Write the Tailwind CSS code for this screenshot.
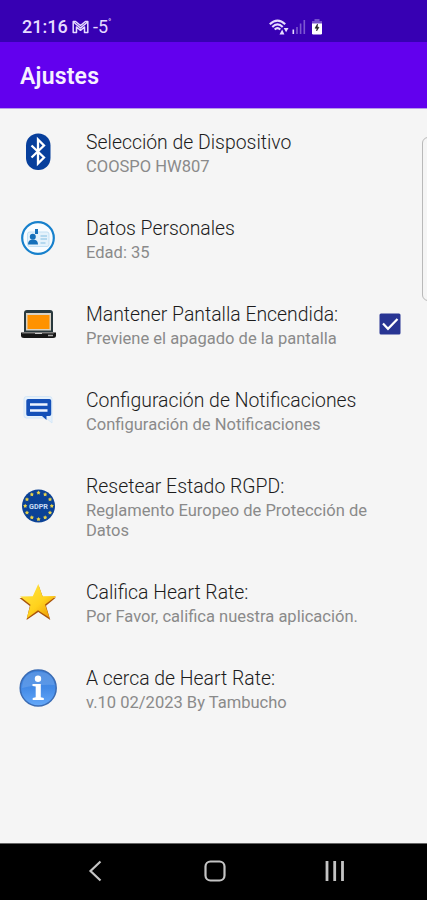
<!DOCTYPE html>
<html lang="es">
<head>
  <meta charset="UTF-8">
  <meta name="viewport" content="width=device-width, initial-scale=1.0">
  <title>Ajustes</title>
  <script src="https://cdn.jsdelivr.net/npm/@tailwindcss/browser@4"></script>
</head>
<body class="bg-[#f5f5f5] font-['Roboto',sans-serif]">
  <div class="relative flex flex-col h-[900px] w-[427px] overflow-hidden">

    <!-- Status bar -->
    <div class="h-[42px] shrink-0 bg-[#3700b3] flex items-center pl-[22px] pt-[11px] text-[#e6dcff]">
      <span class="w-[45px] text-[18px] leading-none font-medium whitespace-nowrap">21:16</span>
      <svg class="ml-[5px] w-[17px] h-[14px]" viewBox="0 0 17 14" fill="none" stroke="currentColor" stroke-width="1.5" stroke-linejoin="round">
        <path d="M1.2 12.5V1.5h2.4l4.9 4 4.9-4h2.4v11h-3.3V7l-4 3.300L4.500 7v5.500z"/>
        <path d="M1.500 2l7 6 7-6"/>
      </svg>
      <span class="ml-1 text-[18px] leading-none whitespace-nowrap">-5</span>
      <span class="mb-[9px] text-[9px] leading-[9px]">°</span>
      <!-- Wifi -->
      <svg class="ml-auto w-[20px] h-[16px]" viewBox="0 0 20 16" fill="none" stroke="currentColor" stroke-width="2.100">
        <path d="M.8 5.300Q8.500-2.200 16.200 5.300"/>
        <path d="M3.300 8Q8.500 2.800 13.700 8"/>
        <path d="M5.700 10.500Q8.500 7.700 11.300 10.500"/>
        <path d="M10.500 15.500l2.700-5 2.200 5zM14.700 9h4.800l-2.400 4.200z" fill="currentColor" stroke="none"/>
      </svg>
      <!-- Signal -->
      <svg class="ml-[3px] w-[14px] h-[15px]" viewBox="0 0 14 15" fill="none" stroke="currentColor" stroke-width="1.600">
        <path d="M1.300 10.500V15"/>
        <path d="M5 8v7M8.600 4.500V15M12.300 1v14" opacity=".4"/>
      </svg>
      <!-- Battery -->
      <svg class="ml-[5px] mr-[104px] w-[12px] h-[16px]" viewBox="0 0 12 16">
        <path d="M3.500 0h5v2H11v3H1V2h2.500z" fill="#7450cc"/>
        <path d="M1 4.500h10V14.200q0 1.300-1.300 1.300H2.300Q1 15.500 1 14.200z" fill="#fff"/>
        <path d="M6.500 5L4 9.200H6l-.4 2.800L8 8.300H6.300z" fill="#222" stroke="#222" stroke-width=".6"/>
      </svg>
    </div>

    <!-- App bar -->
    <header class="h-[67px] shrink-0 bg-[#6200ee] border-b border-[#b79be8] flex items-center pl-5 pt-[4px]">
      <h1 class="text-[23px] font-semibold tracking-[0.2px] text-[#f6f0ff]">Ajustes</h1>
    </header>

    <!-- Settings list -->
    <main class="flex-1">
      <ul>
        <li class="flex items-center h-[86px] pl-[18px]">
          <svg class="w-[40px] h-[40px] shrink-0" viewBox="0 0 40 40">
            <rect x="8" y="1.500" width="24.500" height="36.500" rx="12" fill="#073f9c"/>
            <path d="M13.500 13.500L26 25.500l-6 6V7.500l6 6L13.500 25.500" fill="none" stroke="#fff" stroke-width="2.300"/>
          </svg>
          <div class="ml-7 pt-[3px]">
            <p class="text-[19.400px] leading-[26px] text-[#1c1c1c] font-light whitespace-nowrap">Selección de Dispositivo</p>
            <p class="text-[16.550px] leading-[21px] text-[#8a8a8a]">COOSPO HW807</p>
          </div>
        </li>

        <li class="flex items-center h-[86px] pl-[18px]">
          <svg class="w-[40px] h-[40px] shrink-0" viewBox="0 0 40 40">
            <circle cx="20" cy="20" r="15.800" fill="#f8fcff" stroke="#1680cc" stroke-width="2.200"/>
            <rect x="9.500" y="14" width="21.500" height="14.500" rx="2" fill="#e5f2fb" stroke="#c3e0f4"/>
            <path d="M18.500 11v5" stroke="#1670ba" stroke-width="3"/>
            <circle cx="14.800" cy="18.800" r="3" fill="#1670ba"/>
            <path d="M10 26.500q0-4.300 3.200-4.800h3.400q3.400.5 3.400 4.800z" fill="#1670ba"/>
            <path d="M22.500 18h6.500M22.500 21h6.500M22.500 25h5" stroke="#a3cfec" stroke-width="1.300"/>
          </svg>
          <div class="ml-7 pt-[3px]">
            <p class="text-[19.400px] leading-[26px] text-[#1c1c1c] font-light whitespace-nowrap">Datos Personales</p>
            <p class="text-[16.550px] leading-[21px] text-[#8a8a8a]">Edad: 35</p>
          </div>
        </li>

        <li class="flex items-center h-[86px] pl-[18px]">
          <svg class="w-[40px] h-[40px] shrink-0" viewBox="0 0 40 40">
            <path d="M6 28V9q0-3 3-3h23q3 0 3 3v19z" fill="#29393e"/>
            <rect x="8" y="9" width="25" height="17.500" fill="#d9d2c4"/>
            <rect x="9.500" y="11" width="22" height="14" fill="#ff9200"/>
            <path d="M3 28.500h35v3q0 2.500-3 2.500H6q-3 0-3-2.500z" fill="#171717"/>
            <path d="M4 29h32" stroke="#777" stroke-width="1"/>
            <path d="M17 29.500h7" stroke="#ccc"/>
            <path d="M30 31.500h5" stroke="#aaa" stroke-width="1.500"/>
          </svg>
          <div class="ml-7 pt-[3px]">
            <p class="text-[19.400px] leading-[26px] text-[#1c1c1c] font-light whitespace-nowrap">Mantener Pantalla Encendida:</p>
            <p class="text-[16.550px] leading-[21px] text-[#8a8a8a] whitespace-nowrap">Previene el apagado de la pantalla</p>
          </div>
          <svg class="ml-auto mr-[26px] w-[22px] h-[22px] shrink-0" viewBox="0 0 22 22">
            <rect x=".5" y=".5" width="21" height="21" rx="1.500" fill="#283593"/>
            <path d="M4 10.500l5 5.300L18.500 6" fill="none" stroke="#fff" stroke-width="2.200"/>
          </svg>
        </li>

        <li class="flex items-center h-[86px] pl-[18px]">
          <svg class="w-[40px] h-[40px] shrink-0" viewBox="0 0 40 40">
            <path d="M8.500 6.500h23q2.500 0 2.500 2.500v24l-6-5H8.500Q6 28 6 25.500V9q0-2.500 2.500-2.500z" fill="#e6f1fb" stroke="#d5e7f7"/>
            <path d="M10 9h21.500q1.700 0 1.700 1.700v13.600q0 1.700-1.700 1.700H28.500v4l-4.500-4H10q-1.700 0-1.700-1.700V10.700Q8.300 9 10 9z" fill="#1450b8"/>
            <path d="M12 14.500h17.500M12 20.500h17.500" stroke="#eef5ff" stroke-width="2.300"/>
          </svg>
          <div class="ml-7 pt-[3px]">
            <p class="text-[19.400px] leading-[26px] text-[#1c1c1c] font-light whitespace-nowrap">Configuración de Notificaciones</p>
            <p class="text-[16.550px] leading-[21px] text-[#8a8a8a]">Configuración de Notificaciones</p>
          </div>
        </li>

        <li class="flex items-center h-[106px] pl-[18px]">
          <svg class="w-[40px] h-[40px] shrink-0" viewBox="0 0 40 40">
            <circle cx="20.500" cy="20" r="16.500" fill="#0b4296"/>
            <g id="stars" fill="#e8d34a"></g>
            <text x="20.500" y="22.500" text-anchor="middle" font-size="7" font-weight="700" textLength="19" lengthAdjust="spacingAndGlyphs" fill="#c9dcf5">GDPR</text>
          </svg>
          <div class="ml-7 pt-[2px] w-[300px]">
            <p class="text-[19.400px] leading-[26px] text-[#1c1c1c] font-light whitespace-nowrap">Resetear Estado RGPD:</p>
            <p class="pt-px text-[16.550px] leading-[19.500px] text-[#8a8a8a]">Reglamento Europeo de Protección de<br>Datos</p>
          </div>
        </li>

        <li class="flex items-center h-[86px] pl-[18px]">
          <svg class="w-[40px] h-[40px] shrink-0" viewBox="0 0 40 40">
            <defs>
              <linearGradient id="gold" x1="0" y1="0" x2="1" y2="1">
                <stop offset="0" stop-color="#ffe64a"/>
                <stop offset=".55" stop-color="#ffd21c"/>
                <stop offset="1" stop-color="#e88a00"/>
              </linearGradient>
            </defs>
            <path d="M20.800 4l4.400 12L38 15.500l-10 8.300 4.300 14.200L20.300 30 8.500 38l3.300-14L1.500 16l13.500-.2z" fill="#a9540c"/>
            <path d="M20.300 2l4.200 12.300 13.800-.3L27 22.500l4.500 13.300L20 28.200 8.700 36.500l3.800-13.800L2 14.500l12.800-.2z" fill="url(#gold)"/>
          </svg>
          <div class="ml-7 pt-[3px]">
            <p class="text-[19.400px] leading-[26px] text-[#1c1c1c] font-light whitespace-nowrap">Califica Heart Rate:</p>
            <p class="text-[16.550px] leading-[21px] text-[#8a8a8a] whitespace-nowrap">Por Favor, califica nuestra aplicación.</p>
          </div>
        </li>

        <li class="flex items-center h-[86px] pl-[18px]">
          <svg class="w-[40px] h-[40px] shrink-0" viewBox="0 0 40 40">
            <defs>
              <linearGradient id="blue" x1="0" y1="0" x2="0" y2="1">
                <stop offset="0" stop-color="#3f83dc"/>
                <stop offset=".5" stop-color="#438ae6"/>
                <stop offset="1" stop-color="#65a9fa"/>
              </linearGradient>
            </defs>
            <circle cx="20.200" cy="20" r="18" fill="url(#blue)" stroke="#3b6cb4" stroke-width="1.500"/>
            <path d="M4 20Q5 4 20 4t16.500 13Q22 16 4 20z" fill="#fff" opacity=".13"/>
            <circle cx="20" cy="10.800" r="3.200" fill="#fff"/>
            <path d="M14.500 16h8.300v13.300l3 .7v2H14.700v-2l3-.7V18.500l-3.200-.5z" fill="#fff"/>
          </svg>
          <div class="ml-7 pt-[3px]">
            <p class="text-[19.400px] leading-[26px] text-[#1c1c1c] font-light whitespace-nowrap">A cerca de Heart Rate:</p>
            <p class="text-[16.550px] leading-[21px] text-[#8a8a8a]">v.10 02/2023 By Tambucho</p>
          </div>
        </li>
      </ul>
    </main>

    <!-- Edge panel handle -->
    <div class="absolute left-[422px] top-[137px] w-[12px] h-[164px] rounded-[6px] border border-[#b9b9b9]"></div>

    <!-- Navigation bar -->
    <nav class="h-[57px] shrink-0 bg-black border-t border-[#666] flex items-center">
      <svg class="ml-[87px] mt-[-3px] w-[16px] h-[22px]" viewBox="0 0 16 22" fill="none" stroke="#c4c4c4" stroke-width="2.200">
        <path d="M13.500 1.500L3.500 11l10 9.500"/>
      </svg>
      <svg class="ml-[101px] mt-[-3px] w-[22px] h-[22px]" viewBox="0 0 22 22" fill="none" stroke="#c4c4c4" stroke-width="2.200">
        <rect x="1.500" y="1.500" width="19" height="19" rx="5"/>
      </svg>
      <svg class="ml-[98px] mt-[-3px] w-[22px] h-[22px]" viewBox="0 0 22 22" stroke="#c4c4c4" stroke-width="2.800">
        <path d="M3 1v20M10.700 1v20M18.500 1v20"/>
      </svg>
    </nav>
  </div>

  <script>
    // Ring of twelve stars on the GDPR badge
    const stars = document.getElementById('stars');
    for (let i = 0; i < 12; i++) {
      const a = (i * Math.PI) / 6;
      const cx = 20.5 + 13.3 * Math.sin(a);
      const cy = 20 - 13.3 * Math.cos(a);
      let points = '';
      for (let j = 0; j < 10; j++) {
        const r = j % 2 ? 1.2 : 2.2;
        const b = (j * Math.PI) / 5;
        points += `${cx + r * Math.sin(b)},${cy - r * Math.cos(b)} `;
      }
      stars.innerHTML += `<polygon points="${points}"/>`;
    }
  </script>
</body>
</html>
